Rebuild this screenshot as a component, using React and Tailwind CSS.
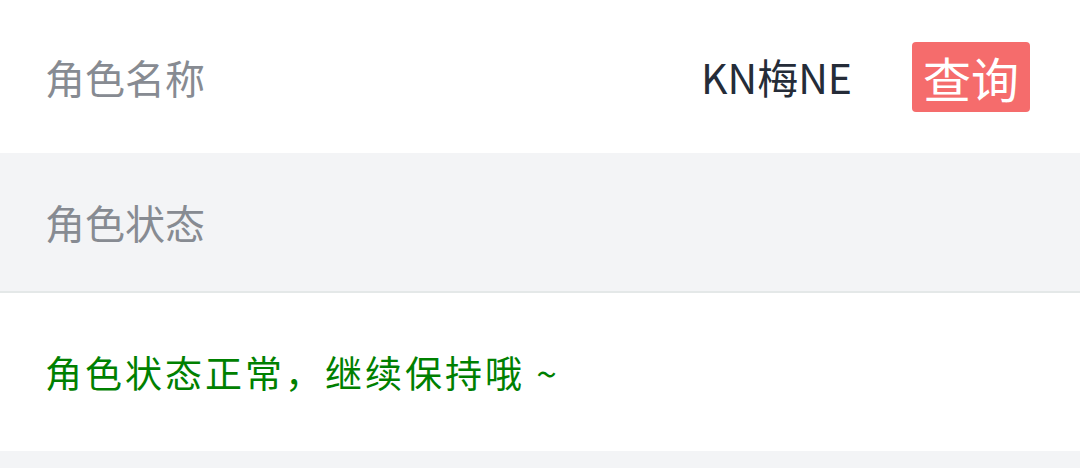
import React from "react";

const font = { fontFamily: '"Noto Sans CJK SC", "Noto Sans", sans-serif' };

function RoleQuery() {
  return (
    <div className="w-[1080px] h-[468px] bg-[#f3f4f6]" style={font}>
      <div className="h-[153px] bg-white flex items-center pl-[45px] pr-[50px]">
        <span className="text-[40px] leading-none text-[#878b92]">角色名称</span>
        <span className="ml-auto text-[41px] leading-none text-[#252c38]">KN梅NE</span>
        <button className="ml-[60px] h-[70px] px-[11px] rounded-[4px] bg-[#f56c6c] text-white text-[48px] leading-none">
          查询
        </button>
      </div>

      <div className="h-[140px] flex items-center pl-[45px] border-b-2 border-[#e4e8e8]">
        <span className="text-[40px] leading-none text-[#878b92]">角色状态</span>
      </div>

      <div className="h-[158px] bg-white flex items-center pl-[45px]">
        <span className="text-[37px] leading-none text-[#008000] tracking-[3px]">
          角色状态正常，继续保持哦 ~
        </span>
      </div>
    </div>
  );
}

export default function App() {
  return <RoleQuery />;
}
